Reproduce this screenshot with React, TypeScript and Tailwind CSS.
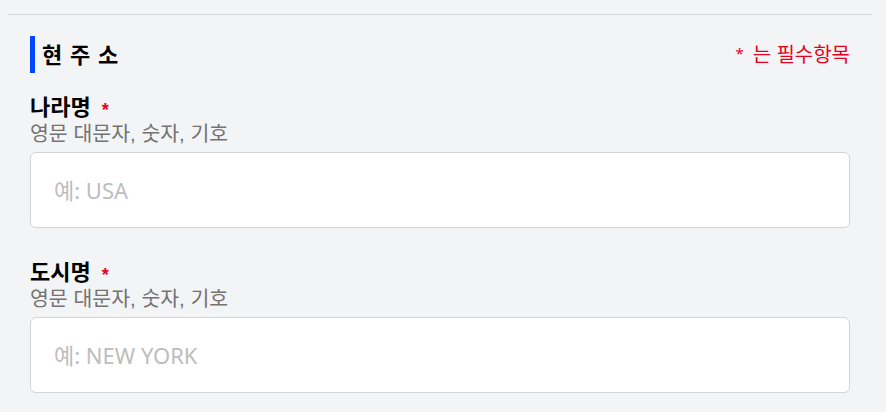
const FONT = "font-['Noto_Sans','Noto_Sans_CJK_KR',sans-serif]";
const TIGHT = "font-['Liberation_Sans','Noto_Sans_CJK_KR',sans-serif]";

function Field({ label, placeholder }: { label: string; placeholder: string }) {
  return (
    <div className="flex flex-col">
      <label className={`flex items-start text-[22px] leading-[27px] font-bold text-black ${TIGHT}`}>
        {label}
        <span className="ml-[11px] mt-[6px] text-[18px] leading-[20px] text-[#e8001c]">*</span>
      </label>
      <p className={`text-[20.5px] leading-[26px] text-[#737373] ${TIGHT}`}>영문 대문자, 숫자, 기호</p>
      <input
        type="text"
        placeholder={placeholder}
        className="mt-[5px] h-[76px] w-full rounded-md border border-[#d4d4d4] bg-white px-[23px] text-[22px] text-black outline-none placeholder:text-[#bdbdbd]"
      />
    </div>
  );
}

export default function App() {
  return (
    <div className={`min-h-screen bg-[#f3f4f6] pt-[14px] ${FONT}`}>
      <div className="mx-2 w-[864px] border-t border-[#d4d4d4]" />
      <section className="pl-[30px] pr-[36px]">
        <div className="mt-[21px] flex items-center justify-between">
          <div className="flex items-center">
            <span className="h-[37px] w-[5px] bg-[#0047ff]" />
            <h2 className="ml-[7px] text-[22px] font-bold tracking-[1px] text-black">현 주 소</h2>
          </div>
          <span className="flex items-start text-[20px] text-[#e8001c]">
            <span className="mr-[9px] mt-[2px] text-[15px]">*</span>는 필수항목
          </span>
        </div>
        <div className="mt-[21px] flex flex-col gap-[31px]">
          <Field label="나라명" placeholder="예: USA" />
          <Field label="도시명" placeholder="예: NEW YORK" />
        </div>
      </section>
    </div>
  );
}
